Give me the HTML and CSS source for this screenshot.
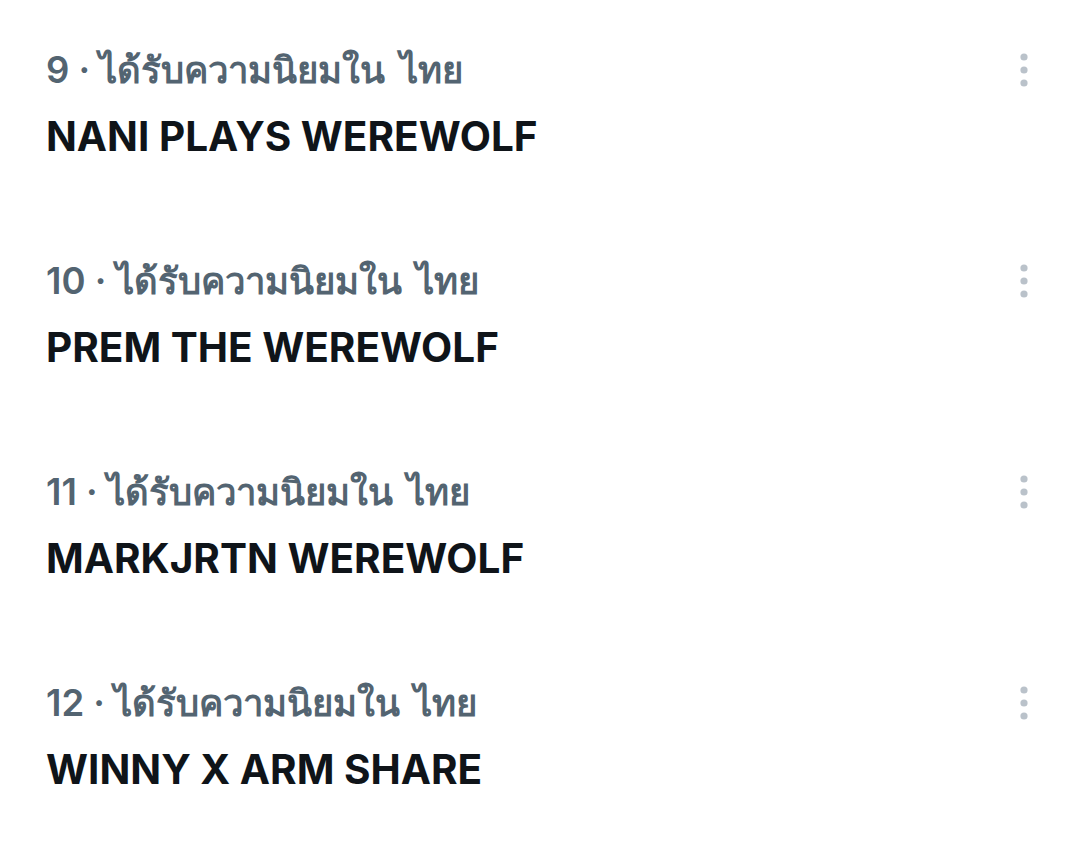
FILE: index.html
```html
<!DOCTYPE html>
<html lang="th">
<head>
  <meta charset="UTF-8" />
  <title>Trends</title>
  <link rel="stylesheet" href="styles.css">
</head>
<body>
  <ul class="trends">
    <li class="trend">
      <div class="trend-text">
        <div class="trend-meta">9 · ได้รับความนิยมใน <span class="place">ไทย</span></div>
        <div class="trend-name">NANI PLAYS WEREWOLF</div>
      </div>
      <button class="more" aria-label="More">
        <svg viewBox="0 0 10 34" width="10" height="34"><circle cx="5" cy="4" r="3.6"/><circle cx="5" cy="17" r="3.6"/><circle cx="5" cy="30" r="3.6"/></svg>
      </button>
    </li>
    <li class="trend">
      <div class="trend-text">
        <div class="trend-meta">10 · ได้รับความนิยมใน <span class="place">ไทย</span></div>
        <div class="trend-name">PREM THE WEREWOLF</div>
      </div>
      <button class="more" aria-label="More">
        <svg viewBox="0 0 10 34" width="10" height="34"><circle cx="5" cy="4" r="3.6"/><circle cx="5" cy="17" r="3.6"/><circle cx="5" cy="30" r="3.6"/></svg>
      </button>
    </li>
    <li class="trend">
      <div class="trend-text">
        <div class="trend-meta">11 · ได้รับความนิยมใน <span class="place">ไทย</span></div>
        <div class="trend-name">MARKJRTN WEREWOLF</div>
      </div>
      <button class="more" aria-label="More">
        <svg viewBox="0 0 10 34" width="10" height="34"><circle cx="5" cy="4" r="3.6"/><circle cx="5" cy="17" r="3.6"/><circle cx="5" cy="30" r="3.6"/></svg>
      </button>
    </li>
    <li class="trend">
      <div class="trend-text">
        <div class="trend-meta">12 · ได้รับความนิยมใน <span class="place">ไทย</span></div>
        <div class="trend-name">WINNY X ARM SHARE</div>
      </div>
      <button class="more" aria-label="More">
        <svg viewBox="0 0 10 34" width="10" height="34"><circle cx="5" cy="4" r="3.6"/><circle cx="5" cy="17" r="3.6"/><circle cx="5" cy="30" r="3.6"/></svg>
      </button>
    </li>
  </ul>
</body>
</html>
```

FILE: styles.css
```css
body {
  margin: 0;
  background-color: #fff;
  font-family: Inter, "Noto Sans", sans-serif;
}
.trends {
  list-style: none;
  margin: 0;
  padding: 44px 0 0 0;
}
.trend {
  display: flex;
  justify-content: space-between;
  align-items: flex-start;
  height: 211px;
  padding: 0 48px 0 46px;
}
.trend-meta {
  color: #536471;
  font-size: 36.5px;
  font-weight: 600;
  line-height: 52px;
}
.trend-meta .place {
  margin-left: 5px;
}
.trend-name {
  color: #0f1419;
  font-size: 40.5px;
  font-weight: 700;
  line-height: 52px;
  margin-top: 15px;
}
.more {
  border: none;
  background: none;
  padding: 0;
  margin-top: 9px;
  fill: #bac2ca;
}
.more svg {
  display: block;
}
```
